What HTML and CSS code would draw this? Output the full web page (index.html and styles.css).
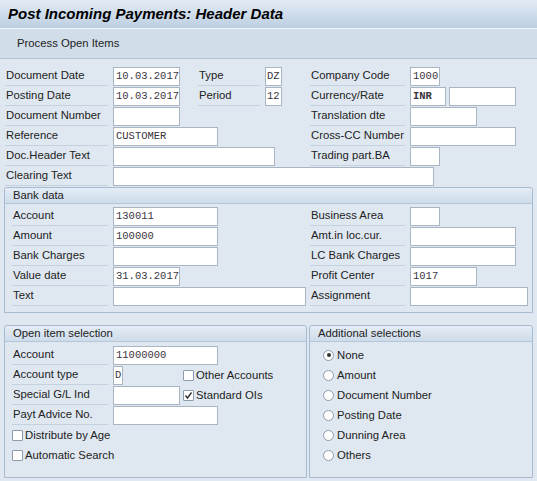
FILE: index.html
```html
<!DOCTYPE html>
<html>
<head>
<meta charset="utf-8">
<link rel="stylesheet" href="styles.css">
</head>
<body>
<div class="titlebar">Post Incoming Payments: Header Data</div>
<div class="toolbar"><span class="tb-btn">Process Open Items</span></div>
<div class="main">
  <div class="top">
    <div class="row rt">
      <span class="lbl c1">Document Date</span><span class="c2"><span class="fld w-date">10.03.2017</span></span>
      <span class="lbl c3">Type</span><span class="c4"><span class="fld w-2">DZ</span></span>
      <span class="lbl c5">Company Code</span><span class="c6"><span class="fld w-4">1000</span></span>
    </div>
    <div class="row rt">
      <span class="lbl c1">Posting Date</span><span class="c2"><span class="fld w-date">10.03.2017</span></span>
      <span class="lbl c3">Period</span><span class="c4"><span class="fld w-2">12</span></span>
      <span class="lbl c5">Currency/Rate</span><span class="c6 pair"><span class="fld w-inr">INR</span><span class="fld w-rate"></span></span>
    </div>
    <div class="row rt">
      <span class="lbl c1">Document Number</span><span class="c2"><span class="fld w-date"></span></span>
      <span class="lbl c5">Translation dte</span><span class="c6"><span class="fld w-date"></span></span>
    </div>
    <div class="row rt">
      <span class="lbl c1">Reference</span><span class="c2"><span class="fld w-ref">CUSTOMER</span></span>
      <span class="lbl c5">Cross-CC Number</span><span class="c6"><span class="fld w-cross"></span></span>
    </div>
    <div class="row rt">
      <span class="lbl c1">Doc.Header Text</span><span class="c2"><span class="fld w-hdr"></span></span>
      <span class="lbl c5">Trading part.BA</span><span class="c6"><span class="fld w-4"></span></span>
    </div>
    <div class="row rt">
      <span class="lbl c1">Clearing Text</span><span class="c2"><span class="fld w-clear"></span></span>
    </div>
  </div>

  <div class="group bank">
    <div class="ghead">Bank data</div>
    <div class="gbody">
      <div class="row rb">
        <span class="lbl c1">Account</span><span class="c2"><span class="fld w-ref">130011</span></span>
        <span class="lbl c3">Business Area</span><span class="c4"><span class="fld w-4"></span></span>
      </div>
      <div class="row rb">
        <span class="lbl c1">Amount</span><span class="c2"><span class="fld w-ref">100000</span></span>
        <span class="lbl c3">Amt.in loc.cur.</span><span class="c4"><span class="fld w-cross"></span></span>
      </div>
      <div class="row rb">
        <span class="lbl c1">Bank Charges</span><span class="c2"><span class="fld w-ref"></span></span>
        <span class="lbl c3">LC Bank Charges</span><span class="c4"><span class="fld w-cross"></span></span>
      </div>
      <div class="row rb">
        <span class="lbl c1">Value date</span><span class="c2"><span class="fld w-date">31.03.2017</span></span>
        <span class="lbl c3">Profit Center</span><span class="c4"><span class="fld w-date">1017</span></span>
      </div>
      <div class="row rb">
        <span class="lbl c1">Text</span><span class="c2"><span class="fld w-text"></span></span>
        <span class="lbl c3">Assignment</span><span class="c4"><span class="fld w-assign"></span></span>
      </div>
    </div>
  </div>

  <div class="bottom">
    <div class="group open">
      <div class="ghead">Open item selection</div>
      <div class="gbody">
        <div class="row ro">
          <span class="lbl c1">Account</span><span class="c2"><span class="fld w-ref">11000000</span></span>
        </div>
        <div class="row ro">
          <span class="lbl c1">Account type</span><span class="c2"><span class="fld w-1">D</span></span>
          <span class="c3 chk"><span class="box"></span>Other Accounts</span>
        </div>
        <div class="row ro">
          <span class="lbl c1">Special G/L Ind</span><span class="c2"><span class="fld w-date"></span></span>
          <span class="c3 chk"><span class="box"><svg width="9" height="9" viewBox="0 0 9 9"><path d="M1.5 4.5 L3.5 7 L7.5 1.5" fill="none" stroke="#333" stroke-width="1.4"/></svg></span>Standard OIs</span>
        </div>
        <div class="row ro">
          <span class="lbl c1">Payt Advice No.</span><span class="c2"><span class="fld w-ref"></span></span>
        </div>
        <div class="row ro">
          <span class="c1 chk wide"><span class="box"></span>Distribute by Age</span>
        </div>
        <div class="row ro">
          <span class="c1 chk wide"><span class="box"></span>Automatic Search</span>
        </div>
      </div>
    </div>
    <div class="group addl">
      <div class="ghead">Additional selections</div>
      <div class="gbody radios">
        <div class="radio on"><span class="rb-circle"></span>None</div>
        <div class="radio"><span class="rb-circle"></span>Amount</div>
        <div class="radio"><span class="rb-circle"></span>Document Number</div>
        <div class="radio"><span class="rb-circle"></span>Posting Date</div>
        <div class="radio"><span class="rb-circle"></span>Dunning Area</div>
        <div class="radio"><span class="rb-circle"></span>Others</div>
      </div>
    </div>
  </div>
</div>
</body>
</html>
```

FILE: styles.css
```css
* { box-sizing: border-box; }
html, body { margin: 0; padding: 0; }
body {
  width: 537px;
  height: 481px;
  overflow: hidden;
  background: #dfe8f1;
  font-family: "Liberation Sans", Arial, sans-serif;
  font-size: 11.3px;
  color: #222;
}
.titlebar {
  height: 29px;
  padding-left: 8px;
  line-height: 28px;
  font-size: 15px;
  font-weight: bold;
  font-style: italic;
  color: #000;
  background: linear-gradient(#e2ebf4, #bccfe2);
  border-bottom: 1px solid #f2f6fa;
}
.toolbar {
  height: 30px;
  background: #d1dde9;
  border-bottom: 1px solid #b2c3d4;
  padding-left: 17px;
  line-height: 29px;
}
.main {
  padding: 7px 4px 0 4px;
}
.top { padding-left: 1px; }
.row {
  display: grid;
  height: 20px;
  align-items: start;
}
.rt { grid-template-columns: 108px 85px 67px 45px 100px 1fr; }
.rb { grid-template-columns: 101px 197px 100px 1fr; }
.ro { grid-template-columns: 101px 70px 1fr; }
.c1 { grid-column: 1; }
.c2 { grid-column: 2; }
.c3 { grid-column: 3; }
.c4 { grid-column: 4; }
.c5 { grid-column: 5; }
.c6 { grid-column: 6; }
.c2, .c4, .c6 { display: flex; min-width: 0; }
.pair { gap: 3px; }
.lbl {
  display: block;
  width: calc(100% - 5px);
  height: 20px;
  line-height: 19px;
  padding-left: 1px;
  border-bottom: 1px solid #c4d1de;
  white-space: nowrap;
}
.fld {
  display: block;
  flex: none;
  height: 19px;
  margin-top: 1px;
  background: #fff;
  border: 1px solid #a9b5c2;
  padding: 0 2px;
  font-family: "Liberation Mono", "Courier New", monospace;
  font-size: 10.5px;
  line-height: 17px;
  color: #3a3340;
  white-space: nowrap;
  overflow: hidden;
}
.w-1 { width: 10px; padding: 0 1px; }
.w-2 { width: 17px; padding: 0 1px; }
.w-4 { width: 30px; }
.w-inr { width: 36px; font-weight: bold; }
.w-rate { width: 67px; }
.w-date { width: 67px; }
.w-ref { width: 105px; }
.w-ref:first-child { }
.w-hdr { width: 162px; }
.w-clear { width: 321px; }
.w-cross { width: 106px; }
.w-text { width: 193px; }
.w-assign { width: 118px; }

.group {
  border: 1px solid #a7bbd0;
  border-radius: 3px 3px 0 0;
  background: #dfe8f1;
}
.bank { margin-top: 1px; height: 126px; }
.ghead {
  height: 16px;
  line-height: 15px;
  padding-left: 8px;
  background: linear-gradient(#e4edf6, #cedbe9);
  border-bottom: 1px solid #b4c6d8;
  border-radius: 3px 3px 0 0;
}
.gbody { padding: 2px 0 0 7px; }
.bottom {
  display: flex;
  gap: 2px;
  margin-top: 12px;
}
.open { width: 303px; height: 153px; }
.open .gbody { padding-top: 3px; }
.addl { flex: 1; height: 153px; }
.chk {
  display: flex;
  align-items: center;
  height: 20px;
  white-space: nowrap;
  gap: 2px;
}
.wide { grid-column: 1 / span 3; }
.box {
  width: 11px;
  height: 11px;
  border: 1px solid #8e9cab;
  background: #fff;
  border-radius: 1px;
  display: flex;
  align-items: center;
  justify-content: center;
  flex: none;
}
.box svg { display: block; }
.radios { padding: 3px 0 0 13px; }
.radio {
  display: flex;
  align-items: center;
  height: 20px;
  gap: 3px;
  white-space: nowrap;
}
.rb-circle {
  width: 11px;
  height: 11px;
  border: 1px solid #8e9cab;
  border-radius: 50%;
  background: #fff;
  flex: none;
  display: flex;
  align-items: center;
  justify-content: center;
}
.radio.on .rb-circle::after {
  content: "";
  width: 4px;
  height: 4px;
  border-radius: 50%;
  background: #333;
}
```
